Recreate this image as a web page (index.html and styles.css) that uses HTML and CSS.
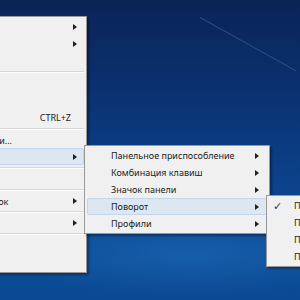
FILE: index.html
```html
<!DOCTYPE html>
<html lang="ru">
<head>
    <meta charset="UTF-8">
    <title>Контекстное меню рабочего стола</title>
    <link rel="stylesheet" href="styles.css">
</head>
<body>
  <div class="desktop">
    <div class="streak"></div>

    <!-- main context menu, pushed past the left edge of the screen -->
    <div class="menu main-menu">
      <div class="item"><span class="label">Вид</span><span class="arrow"></span></div>
      <div class="item"><span class="label">Сортировка</span><span class="arrow"></span></div>
      <div class="item"><span class="label">Обновить</span></div>
      <div class="sep"></div>
      <div class="item"><span class="label">Вставить</span></div>
      <div class="item"><span class="label">Вставить ярлык</span></div>
      <div class="item"><span class="label">Отменить переименование</span><span class="key">CTRL+Z</span></div>
      <div class="sep"></div>
      <div class="item short"><span class="label">Графические характеристики...</span></div>
      <div class="item active"><span class="label">Параметры графики</span><span class="arrow"></span></div>
      <div class="sep"></div>
      <div class="item short"><span class="label">Вывод на</span></div>
      <div class="sep"></div>
      <div class="item short"><span class="label">Отображать на панели значок</span><span class="arrow"></span></div>
      <div class="sep"></div>
      <div class="item short"><span class="label">Создать</span><span class="arrow"></span></div>
      <div class="sep"></div>
      <div class="item"><span class="label">Разрешение экрана</span></div>
      <div class="item"><span class="label">Персонализация</span></div>
    </div>

    <div class="menu sub-menu">
      <div class="item"><span class="label">Панельное приспособление</span><span class="arrow"></span></div>
      <div class="item"><span class="label">Комбинация клавиш</span><span class="arrow"></span></div>
      <div class="item"><span class="label">Значок панели</span><span class="arrow"></span></div>
      <div class="item active"><span class="label">Поворот</span><span class="arrow"></span></div>
      <div class="item"><span class="label">Профили</span><span class="arrow"></span></div>
    </div>

    <div class="menu rotate-menu">
      <div class="item"><span class="check">✓</span><span class="label">Поворот в нормальный вид</span></div>
      <div class="item"><span class="check"></span><span class="label">Поворот на 90 градусов</span></div>
      <div class="item"><span class="check"></span><span class="label">Поворот на 180 градусов</span></div>
      <div class="item"><span class="check"></span><span class="label">Поворот на 270 градусов</span></div>
    </div>
  </div>
</body>
</html>
```

FILE: styles.css
```css
body {
  margin: 0;
  overflow: hidden;
  font-family: "Noto Sans", "DejaVu Sans", sans-serif;
  font-size: 9px;
  color: #1b1b1b;
}

.desktop {
  position: relative;
  width: 300px;
  height: 300px;
  overflow: hidden;
  background:
    radial-gradient(ellipse 180px 40px at 190px 255px, rgba(40, 120, 200, 0.4), transparent),
    linear-gradient(180deg, #0a2456 0%, #0b3170 30%, #0b3f86 55%, #0c4d98 80%, #0b4a93 100%);
}

.streak {
  position: absolute;
  left: 200px;
  top: 17px;
  width: 110px;
  height: 1px;
  background: rgba(140, 180, 230, 0.25);
  transform: rotate(29deg);
  transform-origin: left center;
}

/* menus are popups over the desktop */
.menu {
  position: absolute;
  background: #f0f0f0;
  border: 1px solid #979797;
  box-shadow: 2px 2px 2px rgba(0, 0, 0, 0.35);
  padding: 1px 0;
}

.main-menu {
  left: -152px;
  top: 16px;
  width: 237px;
}

.sub-menu {
  left: 84px;
  top: 145px;
  width: 184px;
}

.rotate-menu {
  left: 266px;
  top: 195px;
  width: 150px;
}

.item {
  display: flex;
  align-items: center;
  height: 17px;
  margin: 0 2px;
  padding: 0 6px 0 24px;
  box-sizing: border-box;
  border: 1px solid transparent;
  white-space: nowrap;
}

.item.short {
  height: 16px;
}

.item.active {
  background: #dde7f2;
  border-color: #c2d5ec;
  border-radius: 2px;
}

.label {
  flex: 1;
}

.key {
  margin-right: 6px;
}

.arrow {
  flex-shrink: 0;
  width: 0;
  height: 0;
  border-top: 3px solid transparent;
  border-bottom: 3px solid transparent;
  border-left: 4px solid #202020;
}

.sep {
  height: 1px;
  margin: 2px 2px 2px 26px;
  background: #d7d7d7;
  border-bottom: 1px solid #ffffff;
}

.sub-menu .item {
  padding-left: 23px;
  padding-right: 7px;
}

.rotate-menu .item {
  padding-left: 2px;
}

.check {
  flex-shrink: 0;
  width: 21px;
  padding-left: 1px;
  color: #1e3d73;
  font-size: 11px;
  font-weight: bold;
}
```
